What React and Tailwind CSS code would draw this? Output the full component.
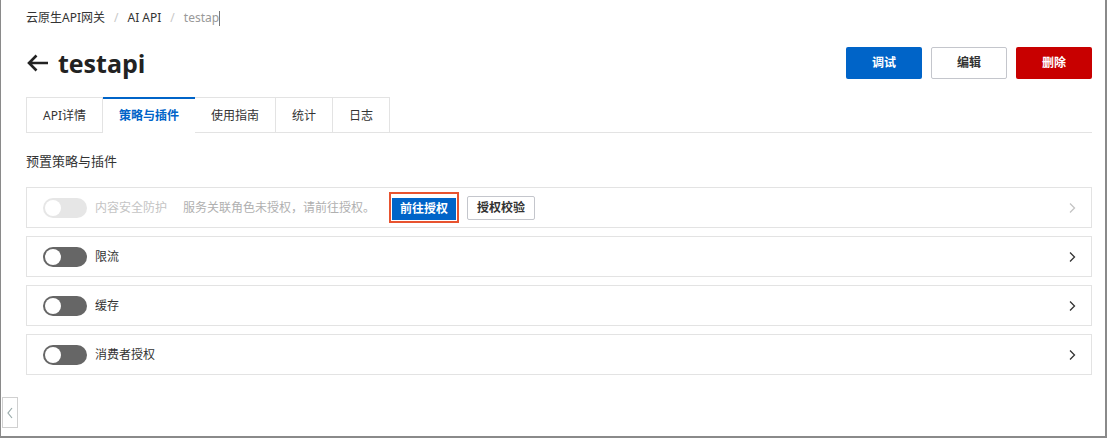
import React from "react";

const font = { fontFamily: '"Noto Sans", "Noto Sans CJK SC", sans-serif' };

function Chevron({ className = "" }) {
  return (
    <svg width="10" height="12" viewBox="0 0 10 12" className={className} fill="none">
      <path d="M3 1.5 L7.5 6 L3 10.5" stroke="currentColor" strokeWidth="1.3" />
    </svg>
  );
}

function Switch({ disabled }) {
  return (
    <div
      className={`w-[44px] h-[20px] rounded-full flex items-center px-[2px] ${
        disabled ? "bg-[#e6e6e6]" : "bg-[#666666]"
      }`}
    >
      <div className="w-[16px] h-[16px] rounded-full bg-white" />
    </div>
  );
}

function Row({ label, children, disabled }) {
  return (
    <div className="h-[41px] border border-[#e3e3e3] flex items-center pl-[16px] pr-[14px]">
      <Switch disabled={disabled} />
      <span className={`ml-[8px] text-[12px] ${disabled ? "text-[#c4c4c4]" : "text-[#333]"}`}>{label}</span>
      {children}
      <div className="flex-1" />
      <Chevron className={disabled ? "text-[#c4c4c4]" : "text-[#333]"} />
    </div>
  );
}

export default function App() {
  const tabs = ["API详情", "策略与插件", "使用指南", "统计", "日志"];
  const widths = ["w-[77px]", "w-[92px]", "w-[81px]", "w-[57px]", "w-[57px]"];
  return (
    <div style={font} className="w-[1107px] h-[438px] bg-white relative">
      <div className="absolute inset-0 border-l border-r-2 border-b-2 border-[#8a8a8a] pointer-events-none" />
      <div className="pl-[26px] pr-[15px] pt-[9px]">
        <div className="flex items-center text-[12px] h-[18px]">
          <span className="text-[#333]">云原生API网关</span>
          <span className="mx-[9px] text-[#c8c8c8]">/</span>
          <span className="text-[#333]">AI API</span>
          <span className="mx-[9px] text-[#c8c8c8]">/</span>
          <span className="text-[#999]">testap</span>
          <span className="w-px h-[15px] bg-[#777]" />
        </div>
        <div className="flex items-center justify-between mt-[20px] h-[32px]">
          <div className="flex items-center text-[#222]">
            <svg width="24" height="20" viewBox="0 0 24 20" fill="none" className="mr-[8px]">
              <path d="M22 10 H3 M10.5 2.5 L3 10 L10.5 17.5" stroke="#222" strokeWidth="2.6" />
            </svg>
            <span className="text-[25px] font-bold leading-none tracking-[0px]" style={{ fontFamily: '"Open Sans", "Noto Sans", sans-serif' }}>testapi</span>
          </div>
          <div className="flex gap-[9px]">
            <button className="w-[76px] h-[32px] bg-[#0064c8] text-white text-[12px] font-bold rounded-[2px]">调试</button>
            <button className="w-[76px] h-[32px] bg-white border border-[#c4c6cc] text-[#333] text-[12px] font-bold rounded-[2px]">编辑</button>
            <button className="w-[76px] h-[32px] bg-[#c80000] text-white text-[12px] font-bold rounded-[2px]">删除</button>
          </div>
        </div>
        <div className="flex mt-[18px] border-b border-[#e3e3e3] h-[36px]">
          {tabs.map((t, i) => (
            <div
              key={t}
              className={`${widths[i]} h-[36px] flex items-center justify-center text-[12px] ${
                i === 1
                  ? "bg-white border-t-2 border-t-[#0064c8] text-[#0064c8] font-bold -mb-px"
                  : "border-t border-r border-[#e3e3e3] text-[#333]"
              } ${i === 0 ? "border-l" : ""}`}
            >
              {t}
            </div>
          ))}
        </div>
        <div className="text-[13px] text-[#333] mt-[19px] h-[18px] leading-[18px]">预置策略与插件</div>
        <div className="flex flex-col gap-[8px] mt-[17px]">
          <Row label="内容安全防护" disabled>
            <span className="ml-[16px] text-[12px] text-[#b0b0b0]">服务关联角色未授权，请前往授权。</span>
            <div className="ml-[14px] border-2 border-[#e8532f] p-px">
              <button className="h-[22px] px-[8px] bg-[#0064c8] text-white text-[12px] font-bold">前往授权</button>
            </div>
            <button className="ml-[8px] h-[24px] px-[9px] border border-[#c4c6cc] bg-white text-[#333] text-[12px] font-bold rounded-[2px]">授权校验</button>
          </Row>
          <Row label="限流" />
          <Row label="缓存" />
          <Row label="消费者授权" />
        </div>
      </div>
      <div className="absolute left-[2px] top-[397px] w-[16px] h-[31px] border border-[#d0d0d0] bg-white flex items-center justify-center text-[#9aa]">
        <svg width="8" height="14" viewBox="0 0 8 14" fill="none">
          <path d="M6 2 L2 7 L6 12" stroke="currentColor" strokeWidth="1.2" />
        </svg>
      </div>
    </div>
  );
}
